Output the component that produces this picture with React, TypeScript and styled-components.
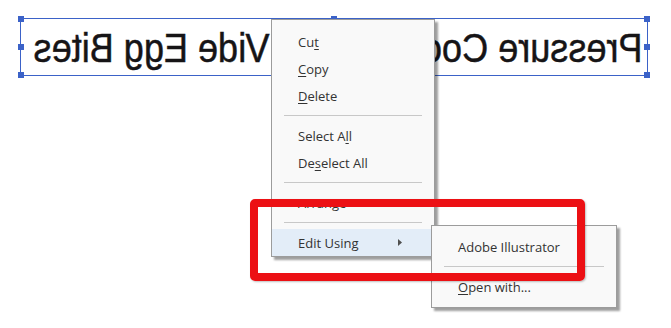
import React from "react";
import styled, { createGlobalStyle } from "styled-components";

const GlobalStyle = createGlobalStyle`
  html, body { margin: 0; padding: 0; background: #ffffff; }
  body { font-family: "Open Sans", "Noto Sans", sans-serif; }
`;

const Canvas = styled.div`
  position: relative;
  width: 671px;
  height: 328px;
  overflow: hidden;
  background: #ffffff;
`;

const TextFrame = styled.div`
  position: absolute;
  left: 20px;
  top: 18px;
  width: 628px;
  height: 58px;
  box-sizing: border-box;
  border: 1px solid #3b62c8;
  display: flex;
  align-items: center;
  justify-content: center;
  padding-left: 8px;
`;

const MirroredText = styled.span`
  display: inline-block;
  font-family: "Liberation Sans", Arial, sans-serif;
  font-size: 41px;
  color: #161416;
  -webkit-text-stroke: 0.5px #161416;
  white-space: nowrap;
  transform: scale(-0.88, 1);
  line-height: 1;
  margin-top: 2px;
`;

const Handle = styled.div<{ $x: string; $y: string }>`
  position: absolute;
  width: 6px;
  height: 6px;
  background: #3b62c8;
  left: ${(p) => p.$x};
  top: ${(p) => p.$y};
  transform: translate(-50%, -50%);
`;

const Menu = styled.div<{ $left: number; $top: number; $width: number; $pt: number; $pb: number }>`
  position: absolute;
  left: ${(p) => p.$left}px;
  top: ${(p) => p.$top}px;
  width: ${(p) => p.$width}px;
  box-sizing: border-box;
  background: #f9f9f9;
  border: 1px solid #9c9c9c;
  box-shadow: 3px 3px 2px rgba(0, 0, 0, 0.38);
  padding: ${(p) => p.$pt}px 0 ${(p) => p.$pb}px 0;
  display: flex;
  flex-direction: column;
`;

const Item = styled.div<{ $active?: boolean }>`
  height: 27px;
  display: flex;
  align-items: center;
  padding-left: 26px;
  padding-right: 12px;
  font-size: 13px;
  color: #333333;
  background: ${(p) => (p.$active ? "#e3edf8" : "transparent")};
`;

const Label = styled.span`
  flex: 1;
  white-space: nowrap;
`;

const Key = styled.span`
  text-decoration: underline;
  text-underline-offset: 2px;
`;

const Separator = styled.div`
  height: 13px;
  display: flex;
  align-items: center;
  padding: 0 12px;
  &::after {
    content: "";
    flex: 1;
    height: 1px;
    background: #c8c8c8;
  }
`;

const Arrow = styled.svg`
  width: 4px;
  height: 7px;
  margin-right: 20px;
`;

const Highlight = styled.div`
  position: absolute;
  left: 250px;
  top: 199px;
  width: 335px;
  height: 82px;
  box-sizing: border-box;
  border: 8px solid #ec1014;
  border-radius: 5px;
  box-shadow: 1px 1px 2px rgba(0, 0, 0, 0.25);
`;

export default function App() {
  return (
    <>
      <GlobalStyle />
      <Canvas>
        <TextFrame>
          <MirroredText>Pressure Cooker Sous Vide Egg Bites</MirroredText>
          <Handle $x="0%" $y="0%" />
          <Handle $x="50%" $y="0%" />
          <Handle $x="100%" $y="0%" />
          <Handle $x="0%" $y="50%" />
          <Handle $x="100%" $y="50%" />
          <Handle $x="0%" $y="100%" />
          <Handle $x="100%" $y="100%" />
        </TextFrame>

        <Menu $left={271} $top={19} $width={164} $pt={8} $pb={0}>
          <Item><Label>Cu<Key>t</Key></Label></Item>
          <Item><Label><Key>C</Key>opy</Label></Item>
          <Item><Label><Key>D</Key>elete</Label></Item>
          <Separator />
          <Item><Label>Select A<Key>l</Key>l</Label></Item>
          <Item><Label>De<Key>s</Key>elect All</Label></Item>
          <Separator />
          <Item><Label>Arran<Key>g</Key>e</Label></Item>
          <Separator />
          <Item $active>
            <Label>Edit Usin<Key>g</Key></Label>
            <Arrow viewBox="0 0 4 7">
              <path d="M0 0 L4 3.5 L0 7 Z" fill="#505050" />
            </Arrow>
          </Item>
        </Menu>

        <Menu $left={431} $top={225} $width={186} $pt={7} $pb={7}>
          <Item><Label>Adobe Illustrator</Label></Item>
          <Separator />
          <Item><Label><Key>O</Key>pen with...</Label></Item>
        </Menu>

        <Highlight />
      </Canvas>
    </>
  );
}
